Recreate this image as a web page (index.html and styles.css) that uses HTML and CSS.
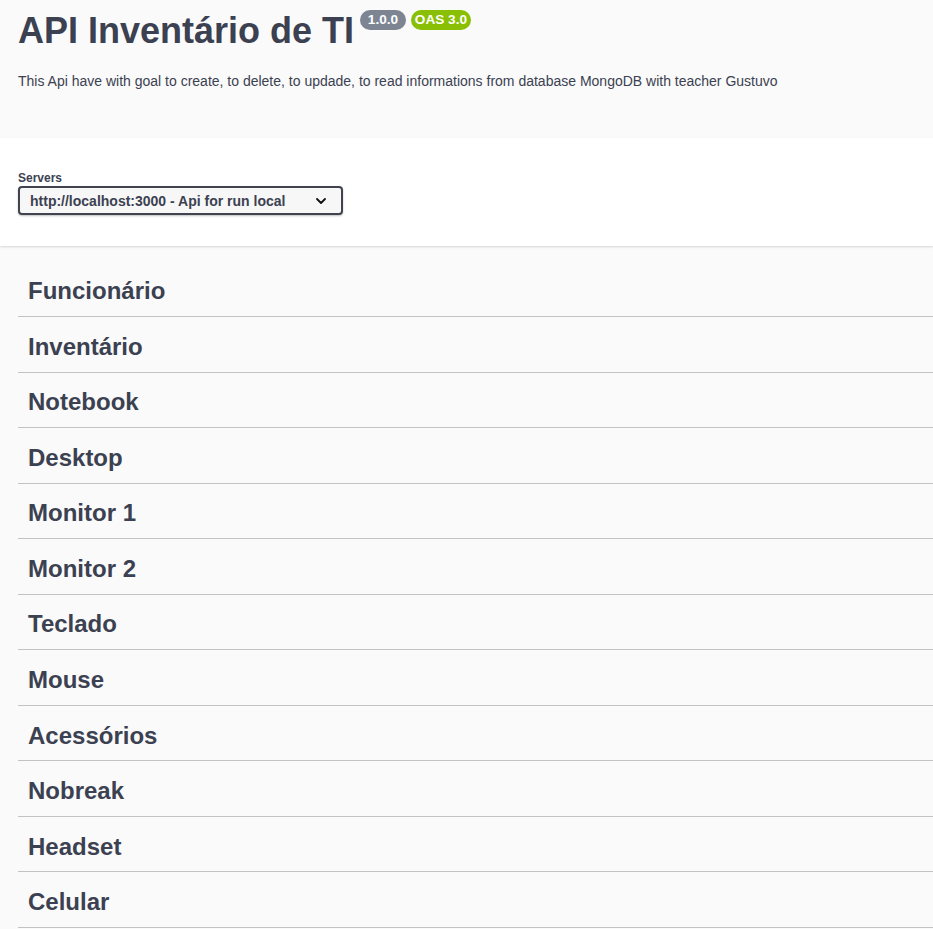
FILE: index.html
```html
<!DOCTYPE html>
<html lang="pt">
<head>
<meta charset="utf-8">
<title>API Inventário de TI</title>
<link rel="stylesheet" href="styles.css">
</head>
<body>
<section class="info">
  <div class="title-row">
    <h2 class="title">API Inventário de TI</h2>
    <span class="badge badge-version"> 1.0.0 </span>
    <span class="badge badge-oas">OAS 3.0</span>
  </div>
  <p class="description">This Api have with goal to create, to delete, to updade, to read informations from database MongoDB with teacher Gustuvo</p>
</section>
<section class="scheme">
  <span class="servers-title">Servers</span>
  <div class="server-select">
    <span class="server-text">http://localhost:3000 - Api for run local</span>
    <svg class="chevron" width="10" height="6" viewBox="0 0 10 6"><path d="M1 1 L5 5 L9 1" fill="none" stroke="#111" stroke-width="1.8" stroke-linecap="round" stroke-linejoin="round"/></svg>
  </div>
</section>
<section class="tags">
  <h3 class="tag">Funcionário</h3>
  <h3 class="tag">Inventário</h3>
  <h3 class="tag">Notebook</h3>
  <h3 class="tag">Desktop</h3>
  <h3 class="tag">Monitor 1</h3>
  <h3 class="tag">Monitor 2</h3>
  <h3 class="tag">Teclado</h3>
  <h3 class="tag">Mouse</h3>
  <h3 class="tag">Acessórios</h3>
  <h3 class="tag">Nobreak</h3>
  <h3 class="tag">Headset</h3>
  <h3 class="tag">Celular</h3>
</section>
</body>
</html>
```
FILE: styles.css
```css
html {
  overflow: hidden;
}
body {
  margin: 0;
  background: #fafafa;
  color: #3b4151;
  font-family: "Liberation Sans", Arial, sans-serif;
}
.info {
  padding: 10px 18px 49px;
}
.title-row {
  display: flex;
  align-items: flex-start;
}
.title {
  margin: 0;
  font-size: 36px;
  line-height: 42px;
  font-weight: 700;
  color: #3b4151;
}
.badge {
  display: inline-block;
  margin-left: 5px;
  padding: 2px 4px;
  border-radius: 57px;
  font-size: 13.6px;
  line-height: 16px;
  font-weight: 700;
  color: #fff;
  white-space: pre;
}
.badge-version {
  margin-left: 6px;
  background: #7d8492;
}
.badge-oas {
  background: #89bf04;
}
.description {
  margin: 21px 0 0;
  font-size: 14px;
  line-height: 16px;
  color: #3b4151;
}
.scheme {
  background: #fff;
  box-shadow: 0 1px 2px 0 rgba(0, 0, 0, 0.15);
  padding: 33px 18px 31px;
  position: relative;
}
.servers-title {
  display: block;
  font-size: 12px;
  line-height: 14px;
  font-weight: 700;
}
.server-select {
  margin-top: 1px;
  box-sizing: border-box;
  width: 325px;
  height: 29px;
  border: 2px solid #41444e;
  border-radius: 4px;
  background: #f7f7f7;
  box-shadow: 0 1px 2px 0 rgba(0, 0, 0, 0.25);
  padding: 0 15px 0 10px;
  display: flex;
  align-items: center;
  justify-content: space-between;
  font-size: 14px;
  font-weight: 700;
  color: #3b4151;
}
.chevron {
  display: block;
}
.tags {
  padding: 20.45px 0 0 18px;
}
.tag {
  box-sizing: border-box;
  height: 50.55px;
  margin: 0 0 5px;
  padding: 0 10px;
  display: flex;
  align-items: center;
  border-bottom: 1px solid rgba(59, 65, 81, 0.3);
  font-size: 24px;
  font-weight: 700;
  color: #3b4151;
}
```
